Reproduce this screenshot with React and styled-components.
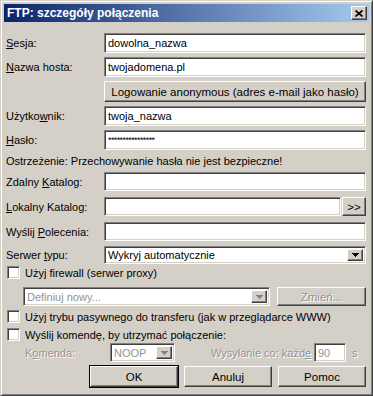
import React from "react";
import styled, { createGlobalStyle, css } from "styled-components";

const GlobalStyle = createGlobalStyle`
  html, body {
    margin: 0;
    padding: 0;
    background: #d4d0c8;
  }
  body {
    font-family: "Liberation Sans", Arial, sans-serif;
    font-size: 11px;
    color: #000;
  }
`;

const raised = css`
  border: 1px solid;
  border-color: #fff #404040 #404040 #fff;
  box-shadow: inset -1px -1px 0 #808080, inset 1px 1px 0 #d4d0c8;
  background: #d4d0c8;
`;

const sunken = css`
  border: 1px solid;
  border-color: #808080 #fff #fff #808080;
  box-shadow: inset 1px 1px 0 #404040, inset -1px -1px 0 #d4d0c8;
  background: #fff;
`;

const disabledText = css`
  color: #939393;
  text-shadow: 1px 1px 0 #fff;
`;

const Window = styled.div`
  width: 373px;
  height: 396px;
  box-sizing: border-box;
  background: #d4d0c8;
  border: 1px solid;
  border-color: #d4d0c8 #404040 #404040 #d4d0c8;
  box-shadow: inset 1px 1px 0 #fff, inset -1px -1px 0 #808080;
  padding: 3px;
  display: flex;
  flex-direction: column;
`;

const TitleBar = styled.div`
  height: 18px;
  flex: none;
  display: flex;
  align-items: center;
  justify-content: space-between;
  padding: 0 2px 0 3px;
  background: linear-gradient(to right, #0a246a, #a6caf0);
`;

const Title = styled.span`
  color: #fff;
  font-weight: bold;
  font-size: 12px;
`;

const CloseButton = styled.div`
  ${raised};
  width: 16px;
  height: 14px;
  box-sizing: border-box;
  display: flex;
  align-items: center;
  justify-content: center;
`;

const Body = styled.div`
  display: flex;
  flex-direction: column;
  padding: 11px 3px 0 2px;
`;

const Row = styled.div`
  display: flex;
  align-items: center;
  margin-top: ${(p) => p.$top || 0}px;
  margin-left: ${(p) => p.$indent || 0}px;
  height: ${(p) => p.$h || 20}px;
  gap: ${(p) => p.$gap || 0}px;
`;

const Label = styled.span`
  width: ${(p) => p.$w || 98}px;
  flex: none;
  white-space: nowrap;
  ${(p) => p.$disabled && disabledText};
`;

const Field = styled.div`
  ${sunken};
  flex: ${(p) => (p.$w ? "none" : 1)};
  width: ${(p) => (p.$w ? `${p.$w}px` : "auto")};
  height: 100%;
  box-sizing: border-box;
  padding: 0 3px;
  display: flex;
  align-items: center;
  white-space: nowrap;
  overflow: hidden;
  ${(p) => p.$disabled && disabledText};
`;

const Mask = styled.span`
  font-size: 9px;
  letter-spacing: -0.6px;
`;

const Combo = styled.div`
  ${sunken};
  flex: ${(p) => (p.$w ? "none" : 1)};
  width: ${(p) => (p.$w ? `${p.$w}px` : "auto")};
  height: 100%;
  box-sizing: border-box;
  padding: 2px;
  display: flex;
  align-items: stretch;
`;

const ComboText = styled.span`
  flex: 1;
  display: flex;
  align-items: center;
  padding-left: 1px;
  white-space: nowrap;
  ${(p) => p.$disabled && disabledText};
`;

const DropButton = styled.div`
  ${raised};
  width: 16px;
  box-sizing: border-box;
  display: flex;
  align-items: center;
  justify-content: center;
`;

const Button = styled.div`
  ${raised};
  box-sizing: border-box;
  width: ${(p) => (p.$w ? `${p.$w}px` : "auto")};
  flex: ${(p) => (p.$w ? "none" : 1)};
  height: 100%;
  display: flex;
  align-items: center;
  justify-content: center;
  font-size: 11.5px;
  ${(p) => p.$disabled && disabledText};
  ${(p) =>
    p.$default &&
    css`
      outline: 1px solid #000;
      outline-offset: 0;
    `};
`;

const SmallButton = styled(Button)`
  width: 24px;
  flex: none;
  margin-left: 1px;
`;

const Warning = styled.div`
  height: 16px;
  margin-top: 3px;
  display: flex;
  align-items: center;
`;

const CheckRow = styled.label`
  display: flex;
  align-items: center;
  gap: 5px;
  height: 13px;
  margin-top: ${(p) => p.$top || 0}px;
  padding-left: 1px;
`;

const CheckBox = styled.span`
  ${sunken};
  width: 13px;
  height: 13px;
  box-sizing: border-box;
  flex: none;
`;

const Spacer = styled.div`
  flex: 1;
`;

const Unit = styled.span`
  width: 14px;
  margin-left: 6px;
  ${disabledText};
`;

const ButtonBar = styled.div`
  display: flex;
  justify-content: flex-end;
  gap: 6px;
  height: 21px;
  margin-top: 4px;
`;

function Arrow({ color = "#000" }) {
  return (
    <svg width="7" height="4" viewBox="0 0 7 4">
      <path d="M0 0h7v1h-1v1h-1v1h-1v1h-1v-1h-1v-1h-1v-1h-1z" fill={color} />
    </svg>
  );
}

function CloseIcon() {
  return (
    <svg width="8" height="7" viewBox="0 0 8 7">
      <path d="M0.5 0.5L7.5 6.5M7.5 0.5L0.5 6.5" stroke="#000" strokeWidth="1.7" />
    </svg>
  );
}

export default function App() {
  return (
    <>
      <GlobalStyle />
      <Window>
        <TitleBar>
          <Title>FTP: szczegóły połączenia</Title>
          <CloseButton>
            <CloseIcon />
          </CloseButton>
        </TitleBar>

        <Body>
          <Row>
            <Label>
              <u>S</u>esja:
            </Label>
            <Field>dowolna_nazwa</Field>
          </Row>
          <Row $top={4}>
            <Label>
              <u>N</u>azwa hosta:
            </Label>
            <Field>twojadomena.pl</Field>
          </Row>
          <Row $top={4} $h={21}>
            <Label />
            <Button>Logowanie anonymous (adres e-mail jako hasło)</Button>
          </Row>
          <Row $top={4}>
            <Label>
              Użytko<u>w</u>nik:
            </Label>
            <Field>twoja_nazwa</Field>
          </Row>
          <Row $top={4}>
            <Label>
              <u>H</u>asło:
            </Label>
            <Field>
              <Mask>{"*".repeat(16)}</Mask>
            </Field>
          </Row>
          <Warning>Ostrzeżenie: Przechowywanie hasła nie jest bezpieczne!</Warning>
          <Row $top={3} $h={19}>
            <Label>
              Zdalny <u>K</u>atalog:
            </Label>
            <Field />
          </Row>
          <Row $top={6} $h={19}>
            <Label>
              <u>L</u>okalny Katalog:
            </Label>
            <Field />
            <SmallButton>&gt;&gt;</SmallButton>
          </Row>
          <Row $top={6} $h={19}>
            <Label>
              Wyślij <u>P</u>olecenia:
            </Label>
            <Field />
          </Row>
          <Row $top={5} $h={18}>
            <Label>
              Serwer <u>t</u>ypu:
            </Label>
            <Combo>
              <ComboText>Wykryj automatycznie</ComboText>
              <DropButton>
                <Arrow />
              </DropButton>
            </Combo>
          </Row>

          <CheckRow $top={2}>
            <CheckBox />
            Użyj firewall (serwer proxy)
          </CheckRow>
          <Row $top={8} $h={19} $indent={17} $gap={7}>
            <Combo $w={247}>
              <ComboText $disabled>Definiuj nowy...</ComboText>
              <DropButton>
                <Arrow color="#808080" />
              </DropButton>
            </Combo>
            <Button $disabled>Zmień...</Button>
          </Row>
          <CheckRow $top={4}>
            <CheckBox />
            Użyj trybu pasywnego do transferu (jak w przeglądarce WWW)
          </CheckRow>
          <CheckRow $top={5}>
            <CheckBox />
            Wyślij komendę, by utrzymać połączenie:
          </CheckRow>
          <Row $top={2} $h={19} $indent={19}>
            <Label $w={85} $disabled>
              K<u>o</u>menda:
            </Label>
            <Combo $w={65}>
              <ComboText $disabled>NOOP</ComboText>
              <DropButton>
                <Arrow color="#808080" />
              </DropButton>
            </Combo>
            <Spacer />
            <Label $w={103} $disabled>
              Wysyłanie co: każd<u>e</u>
            </Label>
            <Field $w={32} $disabled>
              90
            </Field>
            <Unit>s</Unit>
          </Row>

          <ButtonBar>
            <Button $w={88} $default>
              OK
            </Button>
            <Button $w={88}>Anuluj</Button>
            <Button $w={88}>Pomoc</Button>
          </ButtonBar>
        </Body>
      </Window>
    </>
  );
}
